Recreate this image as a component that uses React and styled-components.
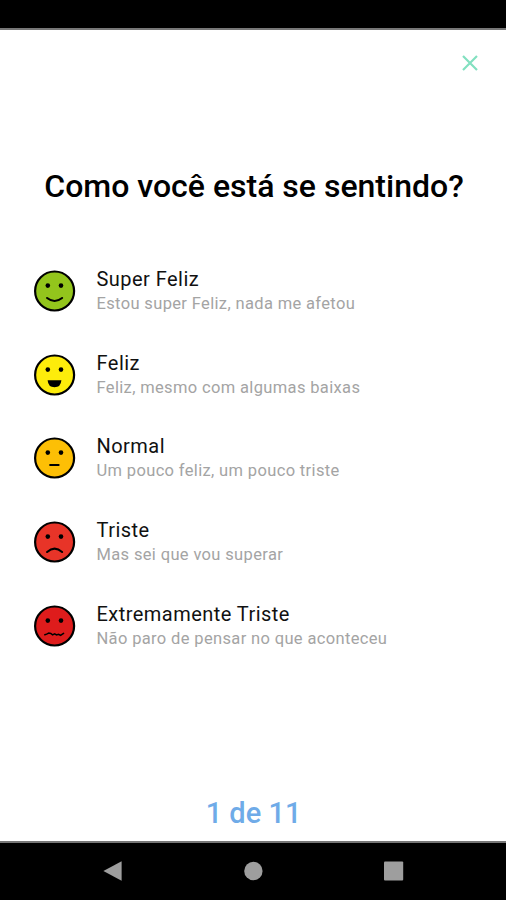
import React from 'react'
import styled, { createGlobalStyle } from 'styled-components'

const moods = [
  {
    type: 'superHappy',
    color: '#93c51c',
    title: 'Super Feliz',
    text: 'Estou super Feliz, nada me afetou',
  },
  {
    type: 'happy',
    color: '#fdec0b',
    title: 'Feliz',
    text: 'Feliz, mesmo com algumas baixas',
  },
  {
    type: 'normal',
    color: '#fdbf05',
    title: 'Normal',
    text: 'Um pouco feliz, um pouco triste',
  },
  {
    type: 'sad',
    color: '#e83428',
    title: 'Triste',
    text: 'Mas sei que vou superar',
  },
  {
    type: 'verySad',
    color: '#de1c1c',
    title: 'Extremamente Triste',
    text: 'Não paro de pensar no que aconteceu',
  },
]

const mouths = {
  superHappy: <path d="M13.5 28q7.5 6 15 0" fill="none" strokeWidth="2.1" />,
  happy: <path d="M14 26.2h13.8q-.6 7-6.9 7t-6.9-7z" fill="#000" stroke="none" />,
  normal: <path d="M16.5 28h8.6" fill="none" strokeWidth="1.9" />,
  sad: <path d="M13.5 31q7.5-6.6 15 0" fill="none" strokeWidth="2.1" />,
  verySad: (
    <path
      d="M11.2 29.8l1.8-.7 2.2-1 2 .4 1.8 1.3 2-1 2 1.2 1.8-.7 2.2 1 1.8-1.2 1.2-.8"
      fill="none"
      strokeWidth="1.5"
    />
  ),
}

const Face = ({ type, color }) => (
  <FaceIcon viewBox="0.4 0 42 42" stroke="#000" strokeLinecap="round">
    <circle cx="21" cy="21" r="19.5" fill={color} strokeWidth="2.2" />
    <circle cx="14.2" cy="15.6" r="2.3" fill="#000" stroke="none" />
    <circle cx="27.4" cy="15.6" r="2.3" fill="#000" stroke="none" />
    {mouths[type]}
  </FaceIcon>
)

const App = () => (
  <Screen>
    <GlobalStyle />
    <StatusBar />
    <Content>
      <Header>
        <CloseButton aria-label="Fechar">
          <svg width="16" height="16" viewBox="0 0 16 16" stroke="#82e0c0" strokeWidth="2.2">
            <path d="M1 1l14 14M15 1L1 15" />
          </svg>
        </CloseButton>
      </Header>
      <Title>Como você está se sentindo?</Title>
      <MoodList>
        {moods.map(mood => (
          <MoodItem key={mood.type}>
            <Face type={mood.type} color={mood.color} />
            <MoodInfo>
              <MoodTitle>{mood.title}</MoodTitle>
              <MoodText>{mood.text}</MoodText>
            </MoodInfo>
          </MoodItem>
        ))}
      </MoodList>
      <Steps>1 de 11</Steps>
    </Content>
    <NavBar>
      <svg width="20" height="22" viewBox="0 0 20 22">
        <path d="M.4 11L18.6 1.2v19.6z" fill="#9e9e9e" />
      </svg>
      <svg width="20" height="22" viewBox="0 0 20 22">
        <circle cx="10.4" cy="11" r="9.2" fill="#9e9e9e" />
      </svg>
      <svg width="20" height="22" viewBox="0 0 20 22">
        <rect x="0" y="1.4" width="19.2" height="19" rx="1" fill="#9e9e9e" />
      </svg>
    </NavBar>
  </Screen>
)

export default App

const GlobalStyle = createGlobalStyle`
  * {
    box-sizing: border-box;
  }
  body {
    margin: 0;
    font-family: Roboto, sans-serif;
  }
`

const Screen = styled.div`
  display: flex;
  flex-direction: column;
  width: 506px;
  height: 900px;
  background-color: #fff;
`

const StatusBar = styled.div`
  height: 30px;
  background-color: #000;
  border-bottom: 2px solid #777;
`

const Content = styled.main`
  display: flex;
  flex: 1;
  flex-direction: column;
`

const Header = styled.header`
  display: flex;
  justify-content: flex-end;
  padding: 25px 28px 0 0;
`

const CloseButton = styled.button`
  display: flex;
  padding: 0;
  border: none;
  background: none;
`

const Title = styled.h1`
  margin: 96px 0 0;
  padding-left: 2px;
  font-size: 32px;
  font-weight: 500;
  line-height: 38px;
  text-align: center;
  white-space: nowrap;
`

const MoodList = styled.ul`
  margin: 44px 0 0;
  padding: 0 0 0 33.5px;
  list-style: none;
`

const MoodItem = styled.li`
  display: flex;
  align-items: center;
  gap: 21px;
  height: 83.7px;
`

const FaceIcon = styled.svg`
  flex: none;
  width: 42px;
  height: 42px;
`

const MoodInfo = styled.div`
  display: flex;
  flex-direction: column;
`

const MoodTitle = styled.span`
  color: #111;
  font-size: 20px;
  line-height: 26px;
  letter-spacing: 0.46px;
`

const MoodText = styled.span`
  color: #a4a4a4;
  font-size: 16.5px;
  line-height: 24px;
  letter-spacing: 0.35px;
`

const Steps = styled.p`
  margin: auto 0 9px;
  padding-left: 1px;
  color: #6fabe8;
  font-size: 29px;
  font-weight: 500;
  line-height: 38px;
  text-align: center;
`

const NavBar = styled.nav`
  display: flex;
  justify-content: space-between;
  align-items: center;
  height: 59px;
  padding: 0 102.5px 2px;
  border-top: 2px solid #777;
  background-color: #000;
`
